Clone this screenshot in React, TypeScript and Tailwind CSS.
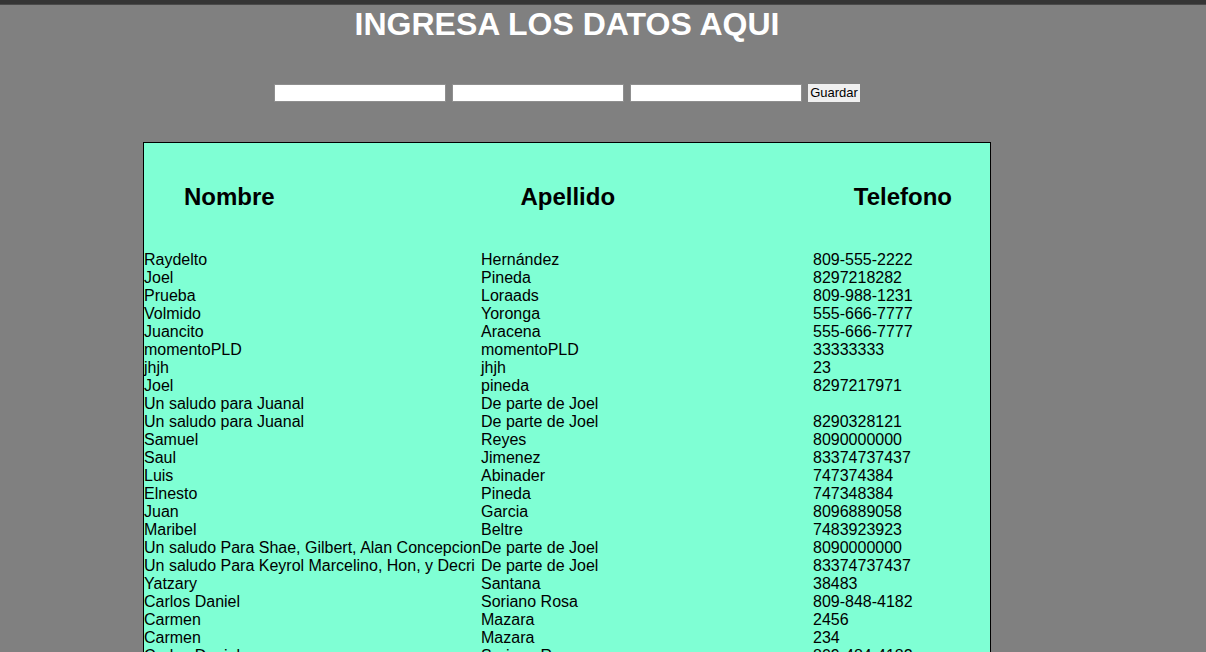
import React from "react";

const personas = [
  { nombre: "Raydelto", apellido: "Hernández", telefono: "809-555-2222" },
  { nombre: "Joel", apellido: "Pineda", telefono: "8297218282" },
  { nombre: "Prueba", apellido: "Loraads", telefono: "809-988-1231" },
  { nombre: "Volmido", apellido: "Yoronga", telefono: "555-666-7777" },
  { nombre: "Juancito", apellido: "Aracena", telefono: "555-666-7777" },
  { nombre: "momentoPLD", apellido: "momentoPLD", telefono: "33333333" },
  { nombre: "jhjh", apellido: "jhjh", telefono: "23" },
  { nombre: "Joel", apellido: "pineda", telefono: "8297217971" },
  { nombre: "Un saludo para Juanal", apellido: "De parte de Joel", telefono: "" },
  { nombre: "Un saludo para Juanal", apellido: "De parte de Joel", telefono: "8290328121" },
  { nombre: "Samuel", apellido: "Reyes", telefono: "8090000000" },
  { nombre: "Saul", apellido: "Jimenez", telefono: "83374737437" },
  { nombre: "Luis", apellido: "Abinader", telefono: "747374384" },
  { nombre: "Elnesto", apellido: "Pineda", telefono: "747348384" },
  { nombre: "Juan", apellido: "Garcia", telefono: "8096889058" },
  { nombre: "Maribel", apellido: "Beltre", telefono: "7483923923" },
  { nombre: "Un saludo Para Shae, Gilbert, Alan Concepcion", apellido: "De parte de Joel", telefono: "8090000000" },
  { nombre: "Un saludo Para Keyrol Marcelino, Hon, y Decri", apellido: "De parte de Joel", telefono: "83374737437" },
  { nombre: "Yatzary", apellido: "Santana", telefono: "38483" },
  { nombre: "Carlos Daniel", apellido: "Soriano Rosa", telefono: "809-848-4182" },
  { nombre: "Carmen", apellido: "Mazara", telefono: "2456" },
  { nombre: "Carmen", apellido: "Mazara", telefono: "234" },
  { nombre: "Carlos Daniel", apellido: "Soriano Rosa", telefono: "809-484-4182" },
  { nombre: "Joel", apellido: "Pineda", telefono: "8297218282" },
];

const App = () => {
  return (
    <div className="h-[652px] overflow-hidden bg-[#808080] font-['Liberation_Sans',Arial,sans-serif] text-black">
      <div className="h-[5px] bg-[#353535] border-b border-[#4a4a4a]" />
      <div className="w-[1134px] flex flex-col items-center">
        <h1 className="mt-[1px] text-[32px] leading-[37px] font-bold text-white">
          INGRESA LOS DATOS AQUI
        </h1>

        {/* formulario */}
        <form className="mt-[41px] flex items-center h-[18px]" onSubmit={(e) => e.preventDefault()}>
          <input className="w-[172px] h-[18px] bg-white border border-[#8f8f8f]" />
          <input className="ml-[6px] w-[172px] h-[18px] bg-white border border-[#8f8f8f]" />
          <input className="ml-[6px] w-[172px] h-[18px] bg-white border border-[#8f8f8f]" />
          <button
            type="submit"
            className="ml-[6px] w-[52px] h-[18px] bg-[#efefef] text-[13px] leading-[16px] text-black"
          >
            Guardar
          </button>
        </form>

        <div className="mt-[40px] w-[848px] border border-black bg-[#7fffd4]">
          <div className="h-[108px] pl-[40px] pr-[38px] flex items-center justify-between text-[24px] font-bold">
            <span>Nombre</span>
            <span className="ml-[7px]">Apellido</span>
            <span>Telefono</span>
          </div>
          <div className="text-[16px] leading-[18px]">
            {personas.map((p, idx) => (
              <div key={idx} className="grid grid-cols-[337px_332px_1fr] h-[18px] whitespace-nowrap">
                <span>{p.nombre}</span>
                <span>{p.apellido}</span>
                <span>{p.telefono}</span>
              </div>
            ))}
          </div>
        </div>
      </div>
    </div>
  );
};

export default App;
